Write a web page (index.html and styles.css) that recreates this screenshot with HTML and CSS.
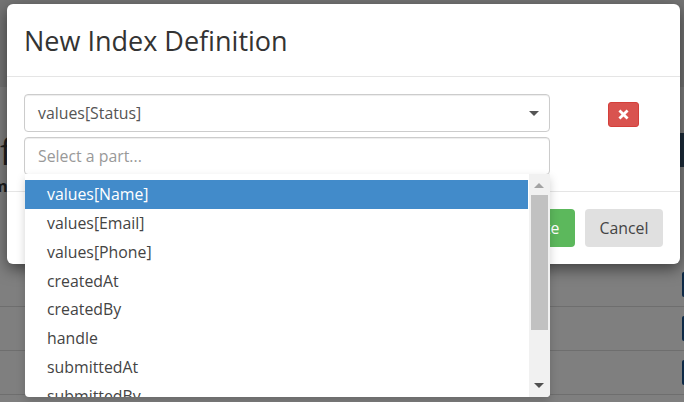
FILE: index.html
```html
<!DOCTYPE html>
<html lang="en">
<head>
    <meta charset="UTF-8">
    <title>New Index Definition</title>
    <link rel="stylesheet" href="styles.css">
</head>
<body>
    <!-- page behind the modal, dimmed -->
    <div class="page">
        <div class="page-head"></div>
        <div class="page-title">f</div>
        <div class="page-sub">m</div>
        <div class="page-row page-row-first"><span class="row-btn"></span></div>
        <div class="page-row"><span class="row-btn"></span></div>
        <div class="page-row"><span class="row-btn"></span></div>
    </div>
    <span class="page-bar"></span>

    <div class="modal">
        <div class="modal-header">
            <h4 class="modal-title">New Index Definition</h4>
        </div>
        <div class="modal-body">
            <div class="field-col">
                <div class="select-box">
                    <span>values[Status]</span>
                    <span class="caret"></span>
                </div>
                <div class="part-box">Select a part...</div>
            </div>
            <button class="btn-remove" type="button">
                <svg width="11" height="11" viewBox="0 0 10 10"><path d="M2.2 .4 5 3.2 7.8 .4 9.6 2.2 6.8 5 9.6 7.8 7.8 9.6 5 6.8 2.2 9.6 .4 7.8 3.2 5 .4 2.2Z" fill="#fff"/></svg>
            </button>
        </div>
        <div class="modal-footer">
            <button class="btn btn-create" type="button">Create</button>
            <button class="btn btn-cancel" type="button">Cancel</button>
        </div>
    </div>

    <!-- open dropdown lies over the modal -->
    <div class="dropdown">
        <ul class="options">
            <li class="option active">values[Name]</li>
            <li class="option">values[Email]</li>
            <li class="option">values[Phone]</li>
            <li class="option">createdAt</li>
            <li class="option">createdBy</li>
            <li class="option">handle</li>
            <li class="option">submittedAt</li>
            <li class="option">submittedBy</li>
        </ul>
        <div class="scrollbar">
            <span class="arrow-up"></span>
            <span class="thumb"></span>
            <span class="arrow-down"></span>
        </div>
    </div>
</body>
</html>
```

FILE: styles.css
```css
* {
    box-sizing: border-box;
    font-family: "Open Sans", sans-serif;
}

html, body {
    height: 100%;
}

body {
    margin: 0;
    overflow: hidden;
    background-color: #7f7f7f;
    color: #333;
}

.page {
    height: 402px;
    overflow: hidden;
    background-color: #7f7f7f;
}

.page-head {
    height: 87px;
    margin-bottom: 47px;
    background-color: #747474;
}

.page-title {
    font-size: 36px;
    line-height: 36px;
    height: 36px;
    color: #1f1f1f;
}

.page-sub {
    font-size: 16px;
    font-weight: 700;
    line-height: 20px;
    margin-top: 6px;
    margin-left: -8px;
    color: #1f1f1f;
}

.page-row {
    height: 44px;
    border-bottom: 1px solid #6e6e6e;
    display: flex;
    justify-content: flex-end;
    align-items: center;
}

.page-row-first {
    margin-top: 67px;
}

.row-btn {
    width: 2px;
    height: 25px;
    background-color: #0e2a47;
    border-radius: 3px 0 0 3px;
}

.page-bar {
    position: absolute;
    top: 133px;
    right: 0;
    width: 4px;
    height: 34px;
    background-color: #1c2c3a;
}

.modal {
    position: absolute;
    top: 4px;
    left: 7px;
    width: 673px;
    height: 260px;
    background-color: #fff;
    border-radius: 6px;
    box-shadow: 0 5px 15px rgba(0, 0, 0, 0.5);
}

.modal-header {
    height: 73px;
    padding: 17px 17px 15px;
    border-bottom: 1px solid #e5e5e5;
}

.modal-title {
    margin: 0;
    font-size: 27px;
    font-weight: 400;
    line-height: 40px;
    color: #333;
}

.modal-body {
    height: 115px;
    padding: 17px 17px 0;
    border-bottom: 1px solid #e5e5e5;
    display: flex;
}

.field-col {
    width: 526px;
    display: flex;
    flex-direction: column;
    gap: 5px;
}

.select-box,
.part-box {
    display: flex;
    align-items: center;
    justify-content: space-between;
    border: 1px solid #ccc;
    border-radius: 4px;
    padding: 0 10px 0 13px;
    font-size: 15.85px;
    color: #555;
    box-shadow: inset 0 1px 1px rgba(0, 0, 0, 0.075);
}

.select-box {
    height: 38px;
}

.part-box {
    height: 38px;
    color: #999;
}

.caret {
    width: 0;
    height: 0;
    border-top: 5px solid #555;
    border-left: 5px solid transparent;
    border-right: 5px solid transparent;
}

.btn-remove {
    width: 31px;
    height: 25px;
    margin: 8px 0 0 58px;
    padding: 0;
    background-color: #d9534f;
    border: 1px solid #d43f3a;
    border-radius: 3px;
    display: flex;
    align-items: center;
    justify-content: center;
}

.modal-footer {
    display: flex;
    justify-content: flex-end;
    gap: 10px;
    padding: 17px 17px 0;
}

.btn {
    height: 38px;
    border: none;
    border-radius: 4px;
    font-size: 15.85px;
}

.btn-create {
    width: 80px;
    background-color: #5cb85c;
    color: #fff;
}

.btn-cancel {
    width: 78px;
    background-color: #e0e0e0;
    color: #444;
}

.dropdown {
    position: absolute;
    top: 174px;
    left: 25px;
    width: 525px;
    height: 223px;
    display: flex;
    background-color: #fff;
    border-radius: 0 0 4px 4px;
    box-shadow: 0 4px 10px rgba(0, 0, 0, 0.175);
    overflow: hidden;
}

.options {
    list-style: none;
    margin: 0;
    padding: 6px 0 0;
    flex: 1;
    min-width: 0;
}

.option {
    height: 28.8px;
    line-height: 28px;
    padding-left: 22px;
    font-size: 15.85px;
    color: #444;
}

.option.active {
    height: 29px;
    background-color: #428bca;
    color: #fff;
}

.scrollbar {
    width: 21px;
    margin-left: 1px;
    background-color: #f1f1f1;
    display: flex;
    flex-direction: column;
    align-items: center;
    position: relative;
}

.arrow-up,
.arrow-down {
    position: absolute;
    left: 5px;
    width: 0;
    height: 0;
    border-left: 5px solid transparent;
    border-right: 5px solid transparent;
}

.arrow-up {
    top: 9px;
    border-bottom: 5px solid #a3a3a3;
}

.arrow-down {
    bottom: 9px;
    border-top: 5px solid #505050;
}

.thumb {
    width: 17px;
    height: 135px;
    margin-top: 21px;
    background-color: #c1c1c1;
}
```
